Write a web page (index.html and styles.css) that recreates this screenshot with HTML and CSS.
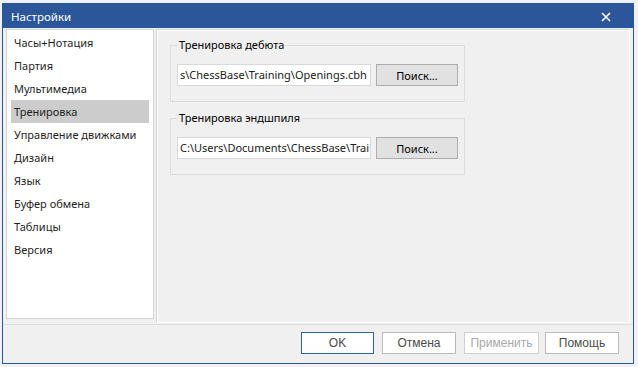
FILE: index.html
```html
<!DOCTYPE html>
<html lang="ru">
<head>
  <meta charset="UTF-8" />
  <title>Настройки</title>
  <link rel="stylesheet" href="styles.css">
</head>
<body>

  <div class="dialog">
    <div class="titlebar">
      <span>Настройки</span>
      <svg class="close" width="10" height="10" viewBox="0 0 10 10">
        <path d="M1 1 L9 9 M9 1 L1 9" stroke="#fff" stroke-width="1.6" fill="none"/>
      </svg>
    </div>

    <div class="main">
      <ul class="sidebar">
        <li>Часы+Нотация</li>
        <li>Партия</li>
        <li>Мультимедиа</li>
        <li class="active">Тренировка</li>
        <li>Управление движками</li>
        <li>Дизайн</li>
        <li>Язык</li>
        <li>Буфер обмена</li>
        <li>Таблицы</li>
        <li>Версия</li>
      </ul>

      <div class="panel">
        <fieldset class="group">
          <legend>Тренировка дебюта</legend>
          <div class="row">
            <div class="field">s\ChessBase\Training\Openings.cbh</div>
            <button class="btn">Поиск...</button>
          </div>
        </fieldset>

        <fieldset class="group">
          <legend>Тренировка эндшпиля</legend>
          <div class="row">
            <div class="field">C:\Users\Documents\ChessBase\Trai</div>
            <button class="btn">Поиск...</button>
          </div>
        </fieldset>
      </div>
    </div>

    <div class="footer">
      <button class="dlg-btn default ok">OK</button>
      <button class="dlg-btn cancel">Отмена</button>
      <button class="dlg-btn apply" disabled>Применить</button>
      <button class="dlg-btn help">Помощь</button>
    </div>
  </div>

</body>
</html>
```

FILE: styles.css
```css
body {
  margin: 0;
  background: #eef1f5;
  font-family: 'Noto Sans', 'Open Sans', sans-serif;
  font-size: 11px;
  color: #000;
  overflow: hidden;
}

.dialog {
  margin: 3px 0 0 2px;
  width: 630px;
  height: 359px;
  border: 1px solid #2b579a;
  background: #f0f0f0;
  display: flex;
  flex-direction: column;
}

.titlebar {
  height: 24px;
  background: #2b579a;
  color: #fff;
  display: flex;
  align-items: center;
  justify-content: space-between;
  padding: 0 22px 0 8px;
  font-size: 11.5px;
}

.close {
  margin-top: 1px;
}

.main {
  display: flex;
  gap: 2px;
  padding: 1px 3px 0 3px;
}

.sidebar {
  flex-shrink: 0;
  list-style: none;
  margin: 0;
  padding: 1px 4px;
  width: 138px;
  height: 286px;
  background: #fff;
  border: 1px solid #d4d4d4;
}

.sidebar li {
  height: 23px;
  line-height: 23px;
  padding-left: 3px;
  color: #1e1e1e;
  white-space: nowrap;
}

.sidebar li.active {
  background: #cccccc;
}

.panel {
  flex-shrink: 0;
  width: 459px;
  height: 285px;
  border: 1px solid #d6d6d6;
  border-right-color: #fff;
  border-bottom-color: #fff;
  box-shadow: inset 1px 1px 0 #fff;
  padding: 7px 0 0 13px;
}

.group {
  width: 278px;
  margin: 0 0 8px 0;
  padding: 11px 6px 15px 6px;
  border: 1px solid #dcdcdc;
}

.group legend {
  padding: 0 1px;
  margin-left: 1px;
  color: #000;
  line-height: 16px;
}

.row {
  display: flex;
  gap: 5px;
}

.field {
  width: 188px;
  height: 20px;
  line-height: 20px;
  padding: 0 2px;
  background: #fff;
  border: 1px solid #d9d9d9;
  white-space: nowrap;
  overflow: hidden;
  color: #202020;
}

.btn {
  width: 82px;
  height: 22px;
  background: #e1e1e1;
  border: 1px solid #adadad;
  font-family: inherit;
  font-size: 11px;
  color: #000;
  padding: 0;
}

.footer {
  flex: 1;
  display: flex;
  align-items: flex-start;
  padding: 7px 14px 0 0;
  justify-content: flex-end;
  border-top: 1px solid #dcdcdc;
  margin-top: 1px;
}

.dlg-btn {
  height: 22px;
  background: #fff;
  border: 1px solid #bcbcbc;
  font-family: 'Liberation Sans', Arial, sans-serif;
  font-size: 12px;
  color: #4a4a4a;
  padding: 0;
}

.dlg-btn.default {
  border-color: #2b62a8;
}

.dlg-btn:disabled {
  color: #a8a8a8;
  border-color: #d0d0d0;
}

.ok { width: 73px; margin-right: 8px; }
.cancel { width: 74px; margin-right: 8px; }
.apply { width: 75px; margin-right: 6px; }
.help { width: 74px; }
```
